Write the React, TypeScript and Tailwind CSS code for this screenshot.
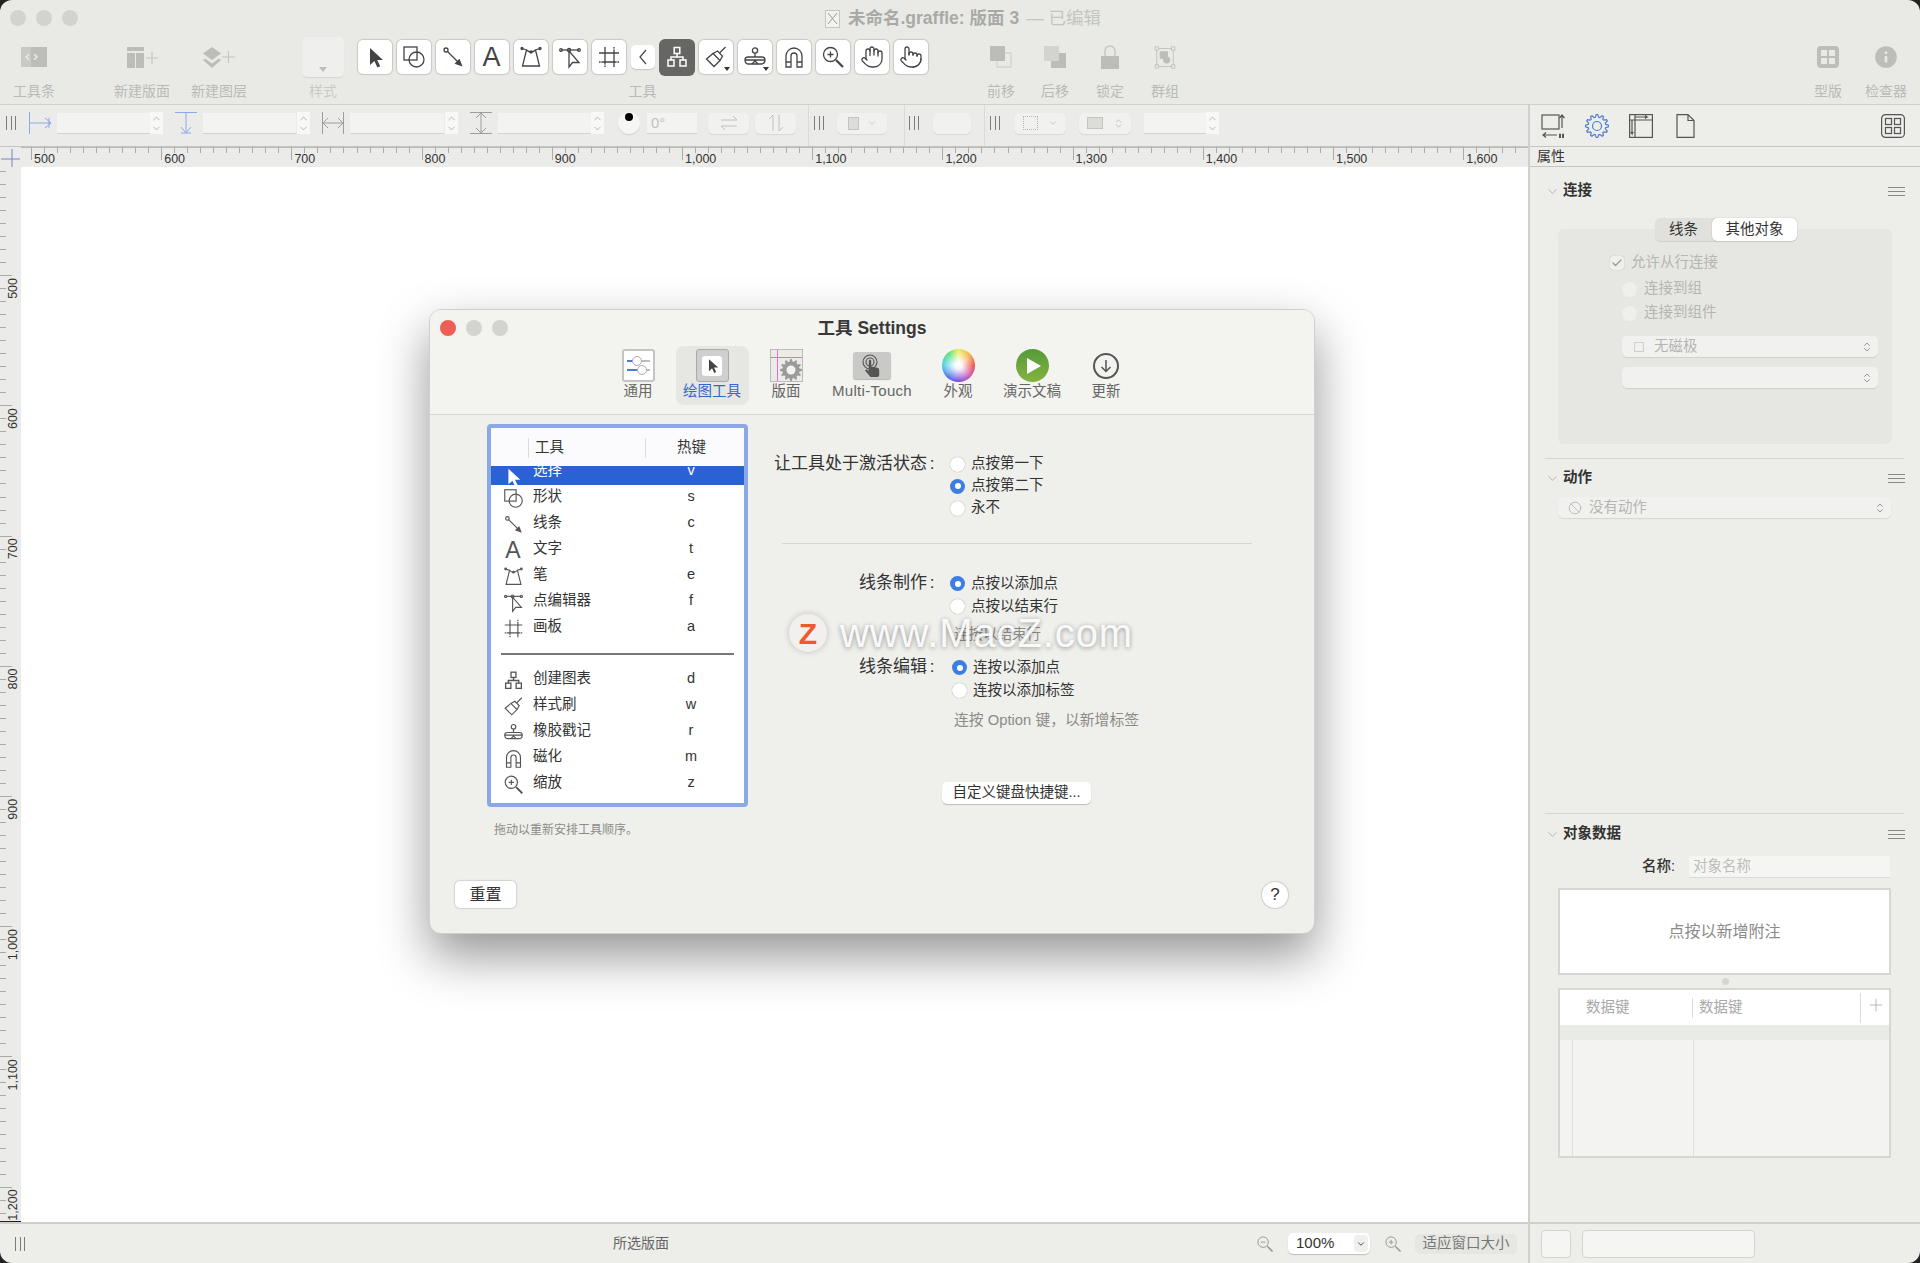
import React from 'react';
import { ChevronDown, ChevronUp, ChevronsUpDown, Hand, Pointer, Ban, Check, Plus, Info } from 'lucide-react';

const Svg = ({ size = 24, sw = 1.3, className = '', children }: { size?: number; sw?: number; className?: string; children: React.ReactNode }) => (
  <svg width={size} height={size} viewBox="0 0 24 24" fill="none" stroke="currentColor" strokeWidth={sw} className={className}>
    {children}
  </svg>
);

const gearPath = (cx: number, cy: number, outer: number, inner: number, teeth: number) => {
  const pts: string[] = [];
  for (let i = 0; i < teeth * 4; i++) {
    const r = i % 4 < 2 ? outer : inner;
    const a = ((i - 0.5) * Math.PI * 2) / (teeth * 4);
    pts.push(`${(cx + r * Math.sin(a)).toFixed(2)} ${(cy - r * Math.cos(a)).toFixed(2)}`);
  }
  return `M${pts.join('L')}Z`;
};

const ArrowIcon = ({ size = 24 }: { size?: number }) => (
  <Svg size={size}><path fill="currentColor" stroke="none" d="M7 3v17l4.4-4 3 6.5 2.8-1.3-3-6.3H20z" /></Svg>
);
const ShapeIcon = ({ size = 24 }: { size?: number }) => (
  <Svg size={size}><rect x="2" y="2" width="13" height="13" /><circle cx="14.5" cy="14.5" r="7.5" /></Svg>
);
const LineIcon = ({ size = 24 }: { size?: number }) => (
  <Svg size={size}><circle cx="5" cy="5" r="2" /><path d="M6.5 6.5L17 17" /><path fill="currentColor" stroke="none" d="M21.5 21.5l-8-2.8 5-5z" /></Svg>
);
const TextIcon = ({ size = 24 }: { size?: number }) => (
  <span style={{ fontSize: size + 3 }} className="leading-none">A</span>
);
const PenIcon = ({ size = 24 }: { size?: number }) => (
  <Svg size={size}>
    <path d="M7.5 5L3.5 21H20.5L16.5 5" />
    <path d="M7.5 5Q12 9 16.5 5" />
    <path d="M3 3.5L8 5M21 3.5L16 5" />
    <circle cx="3" cy="3.5" r="1" /><circle cx="21" cy="3.5" r="1" /><circle cx="12" cy="7" r="1" />
  </Svg>
);
const EditorIcon = ({ size = 24 }: { size?: number }) => (
  <Svg size={size}>
    <path d="M3 5H21" />
    <circle cx="3" cy="5" r="1.3" /><circle cx="21" cy="5" r="1.3" /><circle cx="11" cy="5" r="1.6" />
    <path d="M11 6V22L14.5 17.5H21Z" />
  </Svg>
);
const CanvasIcon = ({ size = 24 }: { size?: number }) => (
  <Svg size={size}>
    <path d="M2 8H22M8 2V22" />
    <path d="M2 17H22M17 2V22" />
    <path stroke="#ffffff" strokeWidth="1.5" d="M3.5 17h1M19.5 17h1M8 19.5v1M17 3.5v1" />
  </Svg>
);
const DiagramIcon = ({ size = 24 }: { size?: number }) => (
  <Svg size={size} sw={1.5}>
    <rect x="9.2" y="2.5" width="5.6" height="6" /><rect x="3" y="15" width="6" height="6" /><rect x="15" y="15" width="6" height="6" />
    <path d="M12 8.5V12M6 15V12H18V15" />
  </Svg>
);
const BrushIcon = ({ size = 24 }: { size?: number }) => (
  <Svg size={size}>
    <path d="M2.5 14L9 8.5L16 15.5L10 21.5Z" />
    <path d="M9 8.5L13.5 6L18.5 11L16 15.5" />
    <path d="M15.5 8L21.5 2" />
  </Svg>
);
const StampIcon = ({ size = 24 }: { size?: number }) => (
  <Svg size={size}>
    <circle cx="12" cy="5.5" r="2.6" />
    <path d="M12 8V12" />
    <path d="M5 12H19Q22 12 22 15Q22 19 18 19H6Q2 19 2 15Q2 12 5 12Z" />
    <path d="M2 15H22M9 19L12 16L15 19" />
  </Svg>
);
const MagnetIcon = ({ size = 24 }: { size?: number }) => (
  <Svg size={size}>
    <path d="M4 22V11a8 8 0 0 1 16 0V22H15V11a3 3 0 0 0-6 0V22Z" />
    <path d="M4 17H9M15 17H20" />
  </Svg>
);
const ZoomIcon = ({ size = 24 }: { size?: number }) => (
  <Svg size={size}>
    <circle cx="9.5" cy="9.5" r="7" />
    <path d="M9.5 6.5V12.5M6.5 9.5H12.5" />
    <path strokeWidth="2.2" d="M15 15L22 22" />
  </Svg>
);
const ZoomOutIcon = () => (
  <Svg size={18}>
    <circle cx="9.5" cy="9.5" r="7" />
    <path d="M6.5 9.5H12.5" />
    <path strokeWidth="2.2" d="M15 15L22 22" />
  </Svg>
);

const toolButtons = [
  <ArrowIcon />, <ShapeIcon />, <LineIcon />, <TextIcon />, <PenIcon />, <EditorIcon />, <CanvasIcon />,
];
const toolButtonsAfter = [
  <BrushIcon />, <StampIcon />, <MagnetIcon />, <ZoomIcon />, <Hand size={24} strokeWidth={1.3} />, <Pointer size={24} strokeWidth={1.3} />,
];

const ToolbarItem = ({ label, className, children }: { label: string; className: string; children: React.ReactNode }) => (
  <div className={`flex flex-col items-center shrink-0 ${className}`}>
    <div className="flex h-[40px] items-center justify-center text-[#bcbdb9]">{children}</div>
    <div className="mt-[4px] h-[20px] text-[14px] leading-[20px] text-[#b9bab6] whitespace-nowrap">{label}</div>
  </div>
);

const Toolbar = () => (
  <div className="h-[105px] shrink-0 bg-[#e9eae6] border-b border-[#cfcfcb]">
    <div className="relative flex h-[37px] items-center justify-center">
      <div className="absolute left-[10px] top-[10px] flex gap-[10px]">
        <span className="size-4 rounded-full bg-[#d2d3ce]" />
        <span className="size-4 rounded-full bg-[#d2d3ce]" />
        <span className="size-4 rounded-full bg-[#d2d3ce]" />
      </div>
      <div className="ml-[6px] flex items-center text-[17.5px] font-bold text-[#a9aaa7] whitespace-nowrap">
        <span className="mr-[8px] flex h-[18px] w-[15px] items-center justify-center border border-[#c4c4c0] bg-[#f2f2ef] text-[#999]">
          <svg width="11" height="13" viewBox="0 0 11 13" fill="none" stroke="currentColor"><path d="M1 1l9 11M10 1L1 12" /></svg>
        </span>
        未命名.graffle: 版面 3
        <span className="ml-[7px] font-normal text-[#c4c5c1]">— 已编辑</span>
      </div>
    </div>
    <div className="flex">
      <ToolbarItem label="工具条" className="ml-[6px] w-[56px]">
        <svg width="26" height="20" viewBox="0 0 26 22" preserveAspectRatio="none"><rect width="26" height="22" fill="#bcbdb9" /><rect x="0" width="10" height="22" fill="#c9cac6" /><path d="M8 8l-3 3 3 3M13 8l3 3-3 3" stroke="#ecece9" strokeWidth="1.5" fill="none" /></svg>
      </ToolbarItem>
      <ToolbarItem label="新建版面" className="ml-[44px] w-[72px]">
        <svg width="31" height="21" viewBox="0 0 31 21" fill="#bcbdb9"><rect x="0" y="0" width="17" height="4" /><rect x="0" y="6" width="8" height="15" /><rect x="9" y="6" width="8" height="15" /><path d="M19 11H31M25 5V17" stroke="#c4c5c1" strokeWidth="1.2" /></svg>
      </ToolbarItem>
      <ToolbarItem label="新建图层" className="ml-[5px] w-[72px]">
        <svg width="32" height="21" viewBox="0 0 32 21" fill="#bcbdb9"><path d="M9 0L18 6.5L9 13L0 6.5Z" /><path d="M2 11.5L9 16.5L16 11.5L18 13L9 21L0 13Z" /><path d="M19 10H32M25.5 4V16" stroke="#c4c5c1" strokeWidth="1.2" /></svg>
      </ToolbarItem>
      <div className="ml-[47px] flex w-[42px] shrink-0 flex-col items-center">
        <div className="flex h-[40px] w-[42px] items-end justify-center rounded-[5px] bg-[#eff0ed] pb-[5px] shadow-[0_1px_1px_rgba(0,0,0,0.08)]">
          <span className="border-x-[4px] border-t-[5px] border-x-transparent border-t-[#bcbcb9]" />
        </div>
        <div className="mt-[4px] h-[20px] text-[14px] leading-[20px] text-[#c9cac6]">样式</div>
      </div>
      <div className="ml-[13px] flex w-[571px] shrink-0 flex-col items-center">
        <div className="flex h-[40px] items-center gap-[5px] text-[#444]">
          {toolButtons.map((icon, i) => (
            <div key={i} className="flex h-[34px] w-[34px] items-center justify-center rounded-[5px] bg-white shadow-[0_0_1px_1px_rgba(0,0,0,0.14)]">{icon}</div>
          ))}
          <div className="flex h-[24px] w-[24px] items-center justify-center rounded-[5px] bg-white shadow-[0_1px_1px_rgba(0,0,0,0.16)]">
            <svg width="10" height="16" viewBox="0 0 10 16" fill="none" stroke="#444" strokeWidth="1.2"><path d="M8 1L2 8L8 15" /></svg>
          </div>
          <div className="-mx-px flex h-[37px] w-[36px] items-center justify-center rounded-[6px] bg-[#666765] text-white"><DiagramIcon /></div>
          {toolButtonsAfter.map((icon, i) => (
            <div key={i} className="relative flex h-[34px] w-[34px] items-center justify-center rounded-[5px] bg-white shadow-[0_0_1px_1px_rgba(0,0,0,0.14)]">
              {icon}
              {i < 2 && <span className="absolute bottom-[3px] right-[3px] border-x-[3px] border-t-[4px] border-x-transparent border-t-[#333]" />}
            </div>
          ))}
        </div>
        <div className="mt-[4px] h-[20px] text-[14px] leading-[20px] text-[#b9bab6]">工具</div>
      </div>
      <ToolbarItem label="前移" className="ml-[53px] w-[40px]">
        <svg width="22" height="22" viewBox="0 0 22 22"><rect x="7" y="7" width="14" height="14" fill="none" stroke="#c9cac6" /><rect x="0" y="0" width="15" height="15" fill="#bcbdb9" /></svg>
      </ToolbarItem>
      <ToolbarItem label="后移" className="ml-[14px] w-[40px]">
        <svg width="22" height="22" viewBox="0 0 22 22"><rect x="7" y="7" width="15" height="15" fill="#bcbdb9" /><rect x="0" y="0" width="15" height="15" fill="#d3d4d0" /></svg>
      </ToolbarItem>
      <ToolbarItem label="锁定" className="ml-[15px] w-[40px]">
        <svg width="20" height="24" viewBox="0 0 20 24" fill="none"><path d="M5 12V6a5 5 0 0 1 10 0V12" stroke="#c4c5c1" strokeWidth="1.4" /><rect x="1" y="11" width="18" height="13" fill="#bcbdb9" /></svg>
      </ToolbarItem>
      <ToolbarItem label="群组" className="ml-[15px] w-[40px]">
        <svg width="22" height="23" viewBox="0 0 26 28" fill="none" stroke="#bcbdb9"><rect x="3" y="3" width="20" height="22" /><rect x="1" y="1" width="4" height="4" fill="#e9eae6" /><rect x="21" y="1" width="4" height="4" fill="#e9eae6" /><rect x="1" y="23" width="4" height="4" fill="#e9eae6" /><rect x="21" y="23" width="4" height="4" fill="#e9eae6" /><rect x="7" y="7" width="9" height="8" fill="#bcbdb9" /><circle cx="15" cy="17" r="4" fill="#bcbdb9" /></svg>
      </ToolbarItem>
      <ToolbarItem label="型版" className="ml-auto w-[40px]">
        <svg width="22" height="22" viewBox="0 0 22 22"><rect width="22" height="22" rx="4" fill="#bdbeba" /><path d="M4 4h6v6H4zM12 4h6v6h-6zM4 12h6v6H4zM12 12h6v6h-6z" fill="#e9eae6" /></svg>
      </ToolbarItem>
      <ToolbarItem label="检查器" className="ml-[10px] mr-[6px] w-[56px]">
        <Info size={26} strokeWidth={0} fill="#bdbeba" className="[&>path]:stroke-[#e9eae6] [&>path]:[stroke-width:2.4px]" />
      </ToolbarItem>
    </div>
  </div>
);

const Grip = ({ className }: { className: string }) => (
  <div className={`flex h-[14px] w-[10px] shrink-0 justify-between ${className}`}>
    <span className="w-px bg-[#7c7c7a]" /><span className="w-px bg-[#7c7c7a]" /><span className="w-px bg-[#7c7c7a]" />
  </div>
);

const Field = ({ className, children }: { className: string; children?: React.ReactNode }) => (
  <div className={`flex h-[20px] shrink-0 items-center bg-[#f3f3f1] shadow-[0_1px_0_rgba(0,0,0,0.1)] text-[15px] text-[#c2c2bf] ${className}`}>{children}</div>
);

const Stepper = ({ className = '' }: { className?: string }) => (
  <div className={`flex h-[22px] w-[13px] shrink-0 flex-col items-center justify-center gap-[1px] bg-[#f8f8f6] text-[#808080] ${className}`}>
    <ChevronUp size={11} strokeWidth={1.2} className="-my-[1px]" />
    <ChevronDown size={11} strokeWidth={1.2} className="-my-[1px]" />
  </div>
);

const VBar = ({ className }: { className: string }) => <div className={`-mb-[5px] w-px shrink-0 self-stretch bg-[#dadad7] ${className}`} />;

const PillBox = ({ className, children }: { className: string; children?: React.ReactNode }) => (
  <div className={`flex h-[21px] shrink-0 items-center justify-center rounded-[5px] bg-[#f1f1ef] shadow-[0_1px_1px_rgba(0,0,0,0.08)] text-[#c0c0bd] ${className}`}>{children}</div>
);

const FormatBar = () => (
  <div className="flex h-[42px] shrink-0 items-center border-b border-[#c4c4c1] bg-[#ebebe9] pb-[5px]">
    <Grip className="ml-[6px]" />
    <svg width="23" height="22" viewBox="0 0 23 22" fill="none" stroke="#8daae2" className="ml-[13px] shrink-0"><path d="M.5 0V22M1 11H22M16 6l6 5-6 5M20 6v10" /></svg>
    <Field className="ml-[5px] w-[93px]" />
    <Stepper />
    <svg width="22" height="22" viewBox="0 0 22 22" fill="none" stroke="#8daae2" className="ml-[12px] shrink-0"><path d="M0 .5H22M11 1V21M6 15l5 6 5-6M6 21h10" /></svg>
    <Field className="ml-[6px] w-[93px]" />
    <Stepper className="ml-[1px]" />
    <svg width="22" height="22" viewBox="0 0 22 22" fill="none" stroke="#9d9d9b" className="ml-[12px] shrink-0"><path d="M.5 0V22M21.5 0V22M1 11H21M6 6l-5 5 5 5M16 6l5 5-5 5" /></svg>
    <Field className="ml-[6px] w-[94px]" />
    <Stepper className="ml-[1px]" />
    <svg width="22" height="22" viewBox="0 0 22 22" fill="none" stroke="#9d9d9b" className="ml-[12px] shrink-0"><path d="M0 .5H22M0 21.5H22M11 1V21M6 6l5-5 5 5M6 16l5 5 5-5" /></svg>
    <Field className="ml-[6px] w-[93px]" />
    <Stepper />
    <div className="relative ml-[14px] size-[22px] shrink-0 rounded-full bg-[#f6f6f4] shadow-[0_1px_1px_rgba(0,0,0,0.12)]">
      <span className="absolute left-[7px] top-[1px] size-[8px] rounded-full bg-black" />
    </div>
    <Field className="ml-[7px] w-[50px] pl-[4px]">0°</Field>
    <PillBox className="ml-[11px] w-[41px]">
      <svg width="18" height="16" viewBox="0 0 18 16" fill="none" stroke="currentColor"><path d="M1 5H17L13 1M17 11H1L5 15" /></svg>
    </PillBox>
    <PillBox className="ml-[6px] w-[41px]">
      <svg width="16" height="18" viewBox="0 0 16 18" fill="none" stroke="currentColor"><path d="M5 17V1L1 5M11 1V17L15 13" /></svg>
    </PillBox>
    <VBar className="ml-[12px]" />
    <Grip className="ml-[5px]" />
    <PillBox className="ml-[13px] w-[50px] gap-[8px]">
      <span className="relative h-[13px] w-[11px] border border-[#c4c4c1] bg-[#dcdcd9]" />
      <ChevronDown size={10} />
    </PillBox>
    <VBar className="ml-[17px]" />
    <Grip className="ml-[4px]" />
    <PillBox className="ml-[14px] w-[38px]" />
    <VBar className="ml-[13px]" />
    <Grip className="ml-[5px]" />
    <PillBox className="ml-[14px] w-[52px] gap-[10px]">
      <span className="h-[14px] w-[15px] border border-dotted border-[#b5b5b2]" />
      <ChevronDown size={10} />
    </PillBox>
    <PillBox className="ml-[13px] w-[52px] gap-[10px]">
      <span className="h-[12px] w-[16px] border border-[#c4c4c1] bg-[#dcdcd9]" />
      <ChevronsUpDown size={11} />
    </PillBox>
    <Field className="ml-[13px] w-[62px]" />
    <Stepper />
  </div>
);

const hTicks = Array.from({ length: 118 }, (_, i) => i);
const vTicks = Array.from({ length: 82 }, (_, i) => i);
const hLabels = ['500', '600', '700', '800', '900', '1,000', '1,100', '1,200', '1,300', '1,400', '1,500', '1,600'];
const vLabels = ['500', '600', '700', '800', '900', '1,000', '1,100', '1,200'];

const HRuler = () => (
  <svg width="1528" height="20" className="block shrink-0 bg-[#ebebe9]">
    <path d="M21 .5H1528" stroke="#b9b9b6" />
    {hTicks.map((i) => {
      const x = Math.round(31 + i * 13.02) + 0.5;
      return <path key={i} d={`M${x} 0V${i % 10 === 0 ? 13 : 6}`} stroke="#aaaaa8" />;
    })}
    {hLabels.map((t, i) => (
      <text key={t} x={34 + i * 130.2} y={16} fontSize={12.5} fill="#333">{t}</text>
    ))}
    <path d="M1 12H20M12 2V20" stroke="#7d83c4" />
  </svg>
);

const VRuler = () => (
  <svg width="21" height="1054" className="block shrink-0 bg-[#ebebe9]">
    {vTicks.map((i) => {
      const y = Math.round(4 + i * 13.02) + 0.5;
      const major = (i - 8) % 10 === 0;
      return <path key={i} d={`M0 ${y}H${major ? 12 : 6}`} stroke="#aaaaa8" />;
    })}
    {vLabels.map((t, i) => {
      const y = 111 + i * 130.2;
      return <text key={t} x={17} y={y} fontSize={12.5} fill="#333" textAnchor="end" transform={`rotate(-90 17 ${y})`}>{t}</text>;
    })}
  </svg>
);

const Radio = ({ on = false, muted = false }: { on?: boolean; muted?: boolean }) => (
  on ? (
    <span className="flex size-[15px] shrink-0 items-center justify-center rounded-full bg-[#3d7ee2]"><span className="size-[6px] rounded-full bg-white" /></span>
  ) : (
    <span className={`size-[15px] shrink-0 rounded-full ${muted ? 'bg-[#efefec]' : 'bg-white shadow-[0_0_1px_rgba(0,0,0,0.45)]'}`} />
  )
);

const RadioRow = ({ on, label, className = '' }: { on?: boolean; label: string; className?: string }) => (
  <div className={`flex items-center gap-[6px] text-[14.5px] text-[#333] whitespace-nowrap ${className}`}>
    <Radio on={on} />
    {label}
  </div>
);

const FormLabel = ({ label }: { label: string }) => (
  <div className="w-[167px] text-right text-[17px] leading-[22px] text-[#333] whitespace-nowrap">
    {label}<span className="inline-block w-[10px] text-center">:</span>
  </div>
);

const rows: { icon: React.ReactNode; label: string; key: string }[] = [
  { icon: <ArrowIcon size={22} />, label: '选择', key: 'v' },
  { icon: <ShapeIcon size={21} />, label: '形状', key: 's' },
  { icon: <LineIcon size={21} />, label: '线条', key: 'c' },
  { icon: <TextIcon size={20} />, label: '文字', key: 't' },
  { icon: <PenIcon size={21} />, label: '笔', key: 'e' },
  { icon: <EditorIcon size={21} />, label: '点编辑器', key: 'f' },
  { icon: <CanvasIcon size={21} />, label: '画板', key: 'a' },
];
const rowsAfter: { icon: React.ReactNode; label: string; key: string }[] = [
  { icon: <DiagramIcon size={21} />, label: '创建图表', key: 'd' },
  { icon: <BrushIcon size={21} />, label: '样式刷', key: 'w' },
  { icon: <StampIcon size={21} />, label: '橡胶戳记', key: 'r' },
  { icon: <MagnetIcon size={21} />, label: '磁化', key: 'm' },
  { icon: <ZoomIcon size={21} />, label: '缩放', key: 'z' },
];

const ToolRow = ({ icon, label, hotkey, selected }: { icon: React.ReactNode; label: string; hotkey: string; selected?: boolean }) => (
  <div className={`flex h-[26px] items-center text-[14.5px] ${selected ? 'bg-[linear-gradient(transparent_7px,#2a62d4_7px)] text-white' : 'text-[#333]'}`}>
    <div className={`ml-[11px] flex w-[22px] items-center justify-center ${selected ? 'translate-y-[5px]' : 'text-[#555]'}`}>{icon}</div>
    <div className="ml-[9px] w-[145px] -translate-y-[1px]">{label}</div>
    <div className="w-[26px] -translate-y-[1px] text-center">{hotkey}</div>
  </div>
);

const TabItem = ({ label, active, className, labelClass = 'text-[14.5px]', children }: { label: string; active?: boolean; className: string; labelClass?: string; children: React.ReactNode }) => (
  <div className={`flex h-[59px] flex-col items-center rounded-[8px] pt-[3px] ${active ? 'bg-[#e6e6e3]' : ''} ${className}`}>
    <div className="flex h-[33px] items-center justify-center">{children}</div>
    <div className={`leading-[18px] whitespace-nowrap ${labelClass} ${active ? 'text-[#3568c4]' : 'text-[#666]'}`}>{label}</div>
  </div>
);

const SettingsDialog = () => (
  <div className="absolute left-[408px] top-[142px] flex h-[625px] w-[886px] flex-col overflow-hidden rounded-[12px] border border-[#cfcfcc] bg-[#efefec] shadow-[0_22px_50px_rgba(0,0,0,0.42)]">
    <div className="h-[105px] shrink-0 border-b border-[#d5d5d2] bg-[#f3f3ef]">
      <div className="relative flex h-[36px] items-center justify-center text-[17.5px] font-semibold text-[#383838]">
        <div className="absolute left-[10px] top-[10px] flex gap-[10px]">
          <span className="size-4 rounded-full bg-[#ec5f57]" />
          <span className="size-4 rounded-full bg-[#d3d4cf]" />
          <span className="size-4 rounded-full bg-[#d3d4cf]" />
        </div>
        工具 Settings
      </div>
      <div className="flex justify-center gap-[15px]">
        <TabItem label="通用" className="w-[45px]">
          <div className="flex size-[33px] flex-col justify-center gap-[7px] rounded-[3px] border-2 border-[#c4c4c2] bg-white px-[3px]">
            <div className="relative h-[2px] bg-[#bbb]"><span className="absolute left-0 top-0 h-[2px] w-[8px] bg-[#4a7ed0]" /><span className="absolute left-[5px] top-[-4px] size-[10px] rounded-full border border-[#aaa] bg-white" /></div>
            <div className="relative h-[2px] bg-[#4a7ed0]"><span className="absolute right-0 top-0 h-[2px] w-[6px] bg-[#bbb]" /><span className="absolute right-[3px] top-[-4px] size-[10px] rounded-full border border-[#aaa] bg-white" /></div>
          </div>
        </TabItem>
        <TabItem label="绘图工具" active className="w-[73px]">
          <div className="flex size-[33px] items-center justify-center rounded-[3px] border border-[#aaa] bg-[#cfcfcd] text-[#444]">
            <span className="flex size-[20px] items-center justify-center rounded-[3px] bg-white"><ArrowIcon size={17} /></span>
          </div>
        </TabItem>
        <TabItem label="版面" className="w-[45px]">
          <div className="relative size-[33px] border border-[#bbb] bg-[#ecebe8]">
            <span className="absolute left-[6px] top-0 h-full w-px bg-[#e36de0]" />
            <span className="absolute left-0 top-[7px] h-px w-full bg-[#e36de0]" />
            <svg width="24" height="24" viewBox="0 0 24 24" className="absolute left-[8px] top-[8px]">
              <path d={gearPath(12, 12, 11, 8.5, 12)} fill="#9b9b99" />
              <circle cx="12" cy="12" r="4.5" fill="#f3f3ef" />
            </svg>
          </div>
        </TabItem>
        <TabItem label="Multi-Touch" labelClass="text-[15px] tracking-[0.3px]" className="w-[97px]">
          <div className="flex h-[27px] w-[38px] items-center justify-center rounded-[3px] bg-[#c9c9c7] shadow-[0_1px_1px_rgba(0,0,0,0.25)]">
            <svg width="22" height="24" viewBox="0 0 22 24" fill="none" stroke="#555" strokeWidth="1.1">
              <circle cx="9" cy="8" r="7" /><circle cx="9" cy="8" r="4" />
              <path fill="#555" stroke="none" d="M7.8 7a1.2 1.2 0 0 1 2.4 0v5.5l6 1.2q2 .4 2 2.3V21a2 2 0 0 1-2 2H9.5L4 16.5l1.2-1.2 2.6 1.5Z" />
            </svg>
          </div>
        </TabItem>
        <TabItem label="外观" className="w-[45px]">
          <div className="relative size-[33px] rounded-full bg-[conic-gradient(#e9ec45,#f0a030_50deg,#ea3b3b_90deg,#c93ea8_135deg,#6a3bdc_180deg,#3c62e6_220deg,#3cc8e6_270deg,#43dc6c_320deg,#e9ec45)]">
            <span className="absolute inset-0 rounded-full bg-[radial-gradient(circle,rgba(255,255,255,0.95)_15%,rgba(255,255,255,0)_75%)]" />
          </div>
        </TabItem>
        <TabItem label="演示文稿" className="w-[73px]">
          <div className="flex size-[33px] items-center justify-center rounded-full bg-[linear-gradient(#559a3a,#84b340)] pl-[3px]">
            <span className="border-y-[8px] border-l-[14px] border-y-transparent border-l-white" />
          </div>
        </TabItem>
        <TabItem label="更新" className="w-[45px]">
          <div className="flex size-[26px] items-center justify-center rounded-full border-2 border-[#555] text-[#555]">
            <svg width="12" height="14" viewBox="0 0 12 14" fill="none" stroke="currentColor" strokeWidth="1.5"><path d="M6 1V12M1.5 8L6 12.5L10.5 8" /></svg>
          </div>
        </TabItem>
      </div>
    </div>
    <div className="flex flex-1 flex-col">
      <div className="flex">
        <div className="ml-[57px] pt-[9px]">
          <div className="flex h-[383px] w-[261px] flex-col overflow-hidden rounded-[4px] border-4 border-[#8aa8e4] bg-white">
            <div className="relative z-10 flex h-[38px] shrink-0 items-center bg-[#fbfbfd] pt-[2px] text-[14.5px] text-[#333]">
              <span className="ml-[37px] h-[20px] w-px bg-[#dcdcdc]" />
              <span className="ml-[6px] w-[110px]">工具</span>
              <span className="h-[20px] w-px bg-[#dcdcdc]" />
              <span className="ml-[31px]">热键</span>
            </div>
            <div className="-mt-[7px]">
              {rows.map((r, i) => (
                <ToolRow key={r.key} icon={r.icon} label={r.label} hotkey={r.key} selected={i === 0} />
              ))}
              <div className="flex h-[26px] items-center px-[10px]"><span className="h-[2px] w-[233px] bg-[#777]" /></div>
              {rowsAfter.map((r) => (
                <ToolRow key={r.key} icon={r.icon} label={r.label} hotkey={r.key} />
              ))}
            </div>
          </div>
          <div className="ml-[7px] mt-[14px] text-[12px] leading-[18px] text-[#8b8b88]">拖动以重新安排工具顺序。</div>
        </div>
        <div className="ml-[22px] w-[480px] pt-[38px]">
          <div className="flex">
            <FormLabel label="让工具处于激活状态" />
            <div className="ml-[13px] flex flex-col">
              <RadioRow label="点按第一下" className="h-[22px]" />
              <RadioRow on label="点按第二下" className="h-[22px]" />
              <RadioRow label="永不" className="h-[22px]" />
            </div>
          </div>
          <div className="ml-[12px] mt-[24px] h-px w-[470px] bg-[#d5d5d2]" />
          <div className="mt-[28px] flex">
            <FormLabel label="线条制作" />
            <div className="ml-[13px] flex flex-col">
              <RadioRow on label="点按以添加点" className="h-[23px]" />
              <RadioRow label="点按以结束行" className="h-[23px]" />
              <div className="ml-[4px] mt-[7px] h-[18px] text-[14.5px] leading-[18px] text-[#8b8b88]">连按以结束行</div>
            </div>
          </div>
          <div className="mt-[13px] flex">
            <FormLabel label="线条编辑" />
            <div className="ml-[15px] flex flex-col">
              <RadioRow on label="连按以添加点" className="h-[23px]" />
              <RadioRow label="连按以添加标签" className="h-[23px]" />
              <div className="ml-[2px] mt-[9px] text-[14.8px] leading-[18px] text-[#8b8b88]">连按 Option 键，以新增标签</div>
            </div>
          </div>
          <div className="ml-[172px] mt-[53px] flex h-[22px] w-[149px] items-center justify-center rounded-[5px] bg-white text-[14.5px] text-[#333] shadow-[0_1px_1px_rgba(0,0,0,0.22)]">自定义键盘快捷键...</div>
        </div>
      </div>
      <div className="mt-auto flex items-center justify-between pb-[25px] pl-[25px] pr-[26px]">
        <div className="flex h-[27px] w-[61px] items-center justify-center rounded-[5px] bg-white text-[16px] text-[#333] shadow-[0_0_1px_1px_rgba(0,0,0,0.12)]">重置</div>
        <div className="flex size-[26px] items-center justify-center rounded-full bg-white text-[17px] text-[#333] shadow-[0_0_1px_1px_rgba(0,0,0,0.14)]">?</div>
      </div>
    </div>
  </div>
);

const Watermark = () => (
  <div className="absolute left-[789px] top-[613px] flex items-center gap-[13px]">
    <div className="flex size-[38px] items-center justify-center rounded-full bg-[#f2f0ee] text-[30px] font-bold text-[#ee5a2c] shadow-[0_0_6px_rgba(0,0,0,0.2)]">Z</div>
    <div className="text-[40px] leading-none tracking-[0.9px] text-white/90 [text-shadow:0_1px_5px_rgba(0,0,0,0.4)] whitespace-nowrap">www.MacZ.com</div>
  </div>
);

const StatusBar = () => (
  <div className="flex h-[41px] shrink-0 items-center border-t-2 border-[#cfcfcb] bg-[#edeeea] text-[14px] text-[#666]">
    <Grip className="ml-[15px]" />
    <div className="ml-[586px] w-[60px] whitespace-nowrap text-center">所选版面</div>
    <div className="ml-[585px] text-[#999]"><ZoomOutIcon /></div>
    <div className="ml-[14px] flex h-[21px] w-[82px] items-center justify-between rounded-[5px] bg-white pl-[8px] pr-[2px] text-[15px] text-[#333] shadow-[0_1px_1px_rgba(0,0,0,0.2)]">
      100%
      <span className="flex h-[17px] w-[14px] items-center justify-center rounded-[4px] bg-[#f0f0ee]"><ChevronDown size={10} /></span>
    </div>
    <div className="ml-[14px] text-[#999]"><ZoomIcon size={18} /></div>
    <div className="ml-[13px] flex h-[20px] w-[102px] items-center justify-center rounded-[5px] bg-[#e6e7e3] text-[14.5px] whitespace-nowrap text-[#777]">适应窗口大小</div>
  </div>
);

const Burger = () => (
  <div className="ml-auto mr-[15px] flex h-[9px] w-[17px] flex-col justify-between">
    <span className="h-px bg-[#888]" /><span className="h-px bg-[#888]" /><span className="h-px bg-[#888]" />
  </div>
);

const SectionHead = ({ label }: { label: string }) => (
  <div className="flex h-[20px] items-center">
    <ChevronDown size={15} strokeWidth={1.3} className="ml-[15px] text-[#aaa]" />
    <span className="ml-[3px] text-[14.5px] font-semibold text-[#333]">{label}</span>
    <Burger />
  </div>
);

const MutedSelect = ({ className, children }: { className: string; children?: React.ReactNode }) => (
  <div className={`flex h-[21px] items-center rounded-[5px] bg-[#f1f2ef] pr-[5px] text-[14.5px] text-[#b5b5b2] shadow-[0_1px_1px_rgba(0,0,0,0.1)] ${className}`}>
    {children}
    <ChevronsUpDown size={12} className="ml-auto text-[#999]" />
  </div>
);

const Inspector = () => (
  <div className="flex w-[392px] shrink-0 flex-col border-l-2 border-[#cfcfcb] bg-[#edeeea]">
    <div className="flex h-[42px] shrink-0 items-center border-b border-[#c4c4c1] text-[#555]">
      <svg width="24" height="24" viewBox="0 0 24 24" fill="none" stroke="currentColor" strokeWidth="1.2" className="ml-[11px]"><rect x="1" y="1" width="17" height="14" /><path d="M21 14V1M18.5 4L21 1L23.5 4M16 21H2M5 18.5L2 21L5 23.5" /><path strokeDasharray="2 1" strokeWidth="2.5" d="M18 21H24M18 23.5H24" /></svg>
      <svg width="24" height="24" viewBox="0 0 24 24" fill="none" stroke="#4a7ed0" strokeWidth="1.2" className="ml-[20px]"><path d={gearPath(12, 12, 11.5, 8.8, 12)} /><circle cx="12" cy="12" r="4.5" /></svg>
      <svg width="24" height="24" viewBox="0 0 24 24" fill="none" stroke="currentColor" strokeWidth="1.2" className="ml-[20px]"><rect x=".6" y=".6" width="22.8" height="22.8" /><path d="M.6 6H23.4M6 .6V23.4M6 3H18l-2-1.5M18 3l-2 1.5M3 6V20l-1.5-2M3 20l1.5-2" /></svg>
      <svg width="19" height="24" viewBox="0 0 19 24" fill="none" stroke="currentColor" strokeWidth="1.2" className="ml-[23px]"><path d="M1 .6H12L18 6.5V23.4H1ZM12 .6V6.5H18" /></svg>
      <svg width="24" height="24" viewBox="0 0 24 24" fill="none" stroke="currentColor" strokeWidth="1.2" className="ml-auto mr-[15px]"><rect x=".6" y=".6" width="22.8" height="22.8" rx="4" /><rect x="4.5" y="4.5" width="6" height="6" /><rect x="13.5" y="4.5" width="6" height="6" /><rect x="4.5" y="13.5" width="6" height="6" /><rect x="13.5" y="13.5" width="6" height="6" /></svg>
    </div>
    <div className="flex h-[20px] shrink-0 items-center border-b border-[#c4c4c1] pl-[7px] text-[14px] text-[#333]">属性</div>
    <div className="mt-[14px]"><SectionHead label="连接" /></div>
    <div className="relative z-10 mx-auto mt-[17px] -mb-[12px] flex h-[23px] w-[142px] translate-x-[1px] rounded-[6px] bg-[#e0e1dd] text-[14.5px] text-[#333] shadow-[0_1px_1px_rgba(0,0,0,0.1)]">
      <div className="flex w-[57px] items-center justify-center">线条</div>
      <div className="flex flex-1 items-center justify-center rounded-[5px] bg-white shadow-[0_0_1px_rgba(0,0,0,0.4)]">其他对象</div>
    </div>
    <div className="ml-[28px] h-[215px] w-[334px] rounded-[6px] bg-[#e6e7e3] pt-[24px] text-[14.5px] text-[#b5b5b2]">
      <div className="ml-[52px] flex h-[20px] items-center gap-[7px]">
        <span className="flex size-[14px] items-center justify-center rounded-[3px] bg-[#efefec] shadow-[0_0_1px_rgba(0,0,0,0.3)] text-[#999]"><Check size={12} strokeWidth={2.5} /></span>
        允许从行连接
      </div>
      <div className="ml-[64px] mt-[6px] flex h-[20px] items-center gap-[7px]"><Radio muted />连接到组</div>
      <div className="ml-[64px] mt-[4px] flex h-[20px] items-center gap-[7px]"><Radio muted />连接到组件</div>
      <MutedSelect className="ml-[64px] mt-[13px] w-[256px]">
        <span className="ml-[12px] size-[10px] border border-[#d0d0cd]" />
        <span className="ml-[10px]">无磁极</span>
      </MutedSelect>
      <MutedSelect className="ml-[64px] mt-[10px] w-[256px]" />
    </div>
    <div className="ml-[15px] mt-[14px] h-px w-[359px] bg-[#d5d6d2]" />
    <div className="mt-[9px]"><SectionHead label="动作" /></div>
    <MutedSelect className="ml-[28px] mt-[9px] w-[333px]">
      <Ban size={14} strokeWidth={1.2} className="ml-[10px] text-[#aaa]" />
      <span className="ml-[7px]">没有动作</span>
    </MutedSelect>
    <div className="ml-[15px] mt-[295px] h-px w-[359px] bg-[#d5d6d2]" />
    <div className="mt-[10px]"><SectionHead label="对象数据" /></div>
    <div className="ml-[28px] mt-[12px] flex h-[21px] items-center">
      <div className="w-[119px] pr-[2px] text-right text-[14.5px] font-medium text-[#333]">名称:</div>
      <div className="ml-[12px] flex h-[21px] w-[201px] items-center bg-[#f5f6f3] pl-[4px] text-[14.5px] text-[#bdbdba] shadow-[0_1px_0_rgba(0,0,0,0.08)]">对象名称</div>
    </div>
    <div className="ml-[28px] mt-[11px] flex h-[87px] w-[333px] items-center justify-center border-2 border-[#d6d7d3] bg-white text-[16px] text-[#8a8a88]">点按以新增附注</div>
    <div className="ml-[192px] mt-[3px] size-[7px] rounded-full bg-[#d5d6d2]" />
    <div className="ml-[28px] mt-[3px] flex h-[170px] w-[333px] flex-col border-2 border-[#d6d7d3] bg-[#f3f4f2]">
      <div className="flex h-[35px] shrink-0 items-center bg-white text-[14.5px] text-[#a9a9a7]">
        <span className="ml-[26px] w-[106px]">数据键</span>
        <span className="h-[20px] w-px bg-[#dcdcda]" />
        <span className="ml-[6px] w-[161px]">数据键</span>
        <span className="h-[30px] w-px bg-[#dcdcda]" />
        <Plus size={20} strokeWidth={1} className="ml-[5px] -translate-y-[3px] text-[#aaa]" />
      </div>
      <div className="h-[15px] shrink-0 bg-[#e9ebe7]" />
      <div className="flex flex-1">
        <span className="ml-[12px] w-px bg-[#dfe0dd]" />
        <span className="ml-[120px] w-px bg-[#dfe0dd]" />
      </div>
    </div>
    <div className="mt-auto flex h-[41px] shrink-0 items-center border-t-2 border-[#cfcfcb]">
      <div className="ml-[11px] h-[28px] w-[30px] rounded-[4px] border border-[#d3d4d0] bg-[#f5f6f3]" />
      <div className="ml-[11px] h-[28px] w-[173px] rounded-[4px] border border-[#d3d4d0] bg-[#f5f6f3]" />
    </div>
  </div>
);

export default function App() {
  return (
    <div className="h-[1263px] w-[1920px] overflow-hidden bg-[#222] [font-family:'Liberation_Sans','Noto_Sans_CJK_SC',sans-serif]">
      <div className="relative flex h-full flex-col overflow-hidden rounded-[12px]">
        <Toolbar />
        <div className="flex min-h-0 flex-1">
          <div className="flex w-[1528px] shrink-0 flex-col">
            <FormatBar />
            <HRuler />
            <div className="flex min-h-0 flex-1">
              <VRuler />
              <div className="relative flex-1 bg-white">
                <SettingsDialog />
              </div>
            </div>
            <StatusBar />
          </div>
          <Inspector />
        </div>
        <Watermark />
      </div>
    </div>
  );
}
